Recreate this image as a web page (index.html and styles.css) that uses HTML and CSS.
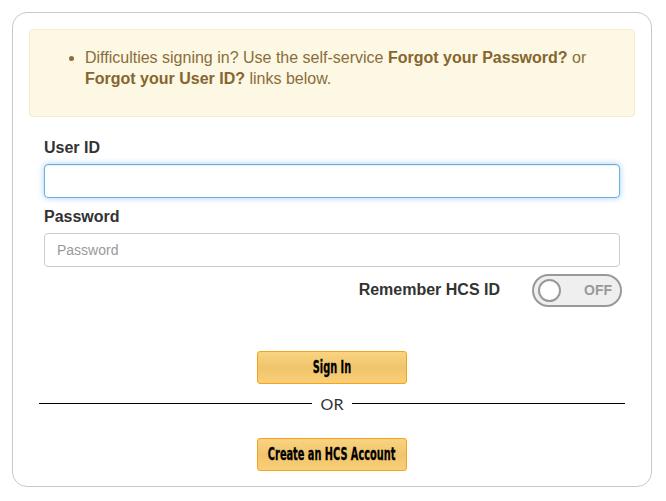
FILE: index.html
```html
<!DOCTYPE html>
<html lang="en">
<head>
<meta charset="utf-8">
<title>Sign In</title>
<link rel="stylesheet" href="styles.css">
</head>
<body>
<div class="card">
  <div class="alert">
    <ul class="alert-list">
      <li>Difficulties signing in? Use the self-service <b>Forgot your Password?</b> or <b>Forgot your User ID?</b> links below.</li>
    </ul>
  </div>
  <form class="form">
    <div class="group">
      <label class="label" for="uid">User ID</label>
      <input class="input input-focus" id="uid" type="text">
    </div>
    <div class="group">
      <label class="label" for="pwd">Password</label>
      <input class="input" id="pwd" type="password" placeholder="Password">
    </div>
    <div class="remember">
      <span class="remember-label">Remember HCS ID</span>
      <div class="toggle"><span class="knob"></span><span class="off">OFF</span></div>
    </div>
  </form>
  <div class="actions">
    <button class="btn btn-first" type="button"><span class="btn-text">Sign In</span></button>
    <div class="divider"><span>OR</span></div>
    <button class="btn btn-second" type="button"><span class="btn-text">Create an HCS Account</span></button>
  </div>
</div>
</body>
</html>
```
FILE: styles.css
```css
body {
  margin: 0;
  font-family: "Liberation Sans", Arial, sans-serif;
  color: #333;
  background: #fff;
}
.card {
  margin: 12px 0 0 12px;
  width: 638px;
  border: 1px solid #c8c8c8;
  border-radius: 15px;
  padding: 16px 0 15px;
}
.alert {
  margin: 0 16px 20px;
  background: #fcf8e3;
  border: 1px solid #faebcc;
  border-radius: 4px;
  padding: 17px 15px 15px;
  color: #8a6d3b;
  font-size: 16px;
  line-height: 21.33px;
}
.alert-list {
  margin: 0 0 11px;
  padding-left: 40px;
}
.alert-list b {
  color: #86652f;
}
.form {
  padding: 0 31px;
}
.label {
  display: block;
  font-weight: bold;
  font-size: 16px;
  line-height: 22px;
  margin-bottom: 5px;
}
.input {
  display: block;
  width: 100%;
  box-sizing: border-box;
  height: 34px;
  border: 1px solid #ccc;
  border-radius: 4px;
  padding: 6px 12px;
  font-size: 14px;
  font-family: inherit;
  color: #555;
  background: #fff;
  outline: none;
}
.input::placeholder {
  color: #999;
}
.input-focus {
  border-color: #66afe9;
  box-shadow: inset 0 1px 1px rgba(0,0,0,.075), 0 0 6px rgba(102,175,233,.6);
}
.group + .group {
  margin-top: 8px;
}
.remember {
  display: flex;
  justify-content: flex-end;
  align-items: center;
  gap: 32px;
  margin-top: 7px;
  margin-right: -2px;
}
.remember-label {
  font-weight: bold;
  font-size: 16px;
}
.toggle {
  width: 90px;
  height: 33px;
  box-sizing: border-box;
  border: 2px solid #999;
  border-radius: 17px;
  background: #efefef;
  display: flex;
  align-items: center;
  padding-left: 4px;
}
.knob {
  width: 23px;
  height: 23px;
  box-sizing: border-box;
  border: 2px solid #999;
  border-radius: 50%;
  background: #fff;
}
.off {
  margin-left: 23px;
  font-weight: bold;
  font-size: 14px;
  color: #999;
}
.actions {
  display: flex;
  flex-direction: column;
  align-items: center;
  padding: 0 26px;
}
.btn {
  width: 150px;
  height: 33px;
  box-sizing: border-box;
  border: 1px solid #f7a21b;
  border-radius: 3px;
  background: linear-gradient(#fad482, #f0c46d 50%, #f9cf77);
  padding: 0;
  display: flex;
  align-items: center;
  justify-content: center;
  cursor: pointer;
}
.btn-first {
  margin-top: 44px;
}
.btn-second {
  margin-top: 24px;
}
.btn-text {
  display: inline-block;
  white-space: nowrap;
  font-family: "DejaVu Sans Condensed", "DejaVu Sans", sans-serif;
  font-stretch: condensed;
  font-weight: bold;
  font-size: 17px;
  color: #000;
  -webkit-text-stroke: 0.3px #000;
  transform: scaleX(0.64);
}
.divider {
  align-self: stretch;
  display: flex;
  align-items: center;
  gap: 9px;
  margin-top: 10px;
  height: 20px;
  font-family: Lato, "Liberation Sans", sans-serif;
  font-size: 16px;
  color: #333;
}
.divider::before,
.divider::after {
  content: "";
  flex: 1;
  border-top: 1px solid #000;
}
```
